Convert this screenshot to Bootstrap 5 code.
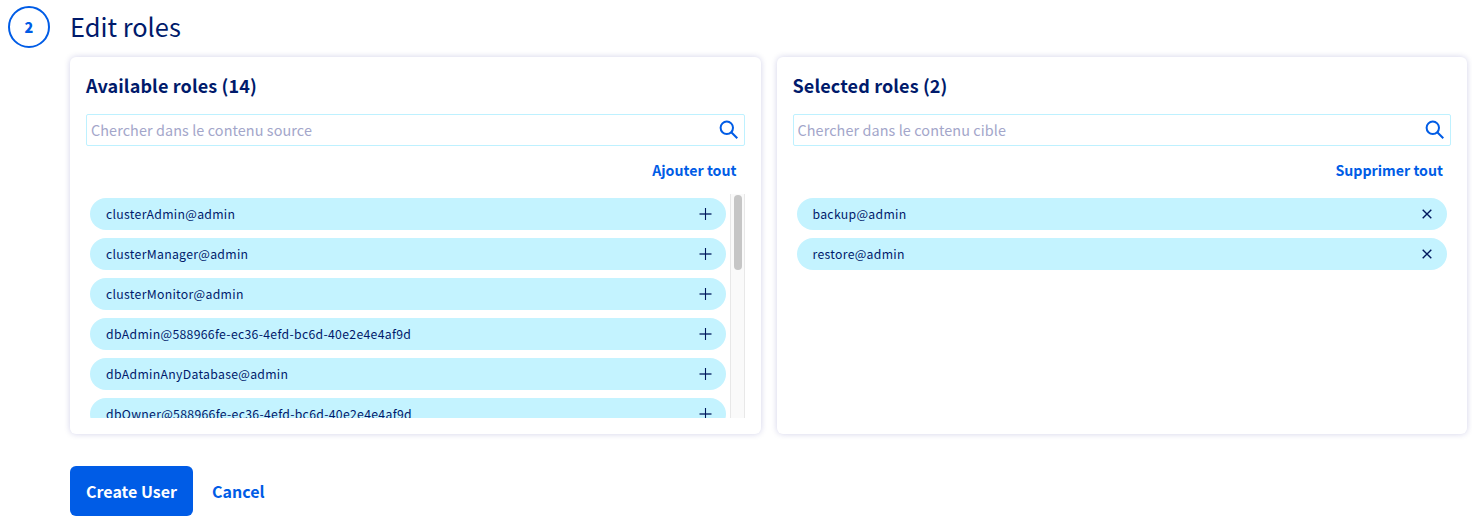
<!DOCTYPE html>
<html lang="fr">
<head>
<meta charset="utf-8">
<meta name="viewport" content="width=device-width, initial-scale=1">
<title>Edit roles</title>
<link href="https://cdn.jsdelivr.net/npm/bootstrap@5.3.0/dist/css/bootstrap.min.css" rel="stylesheet">
<style>
  body { font-family: "Noto Sans CJK SC", "Open Sans", sans-serif; color: #001a6b; overflow: hidden; }
  .step { padding: 6px 5px 0 8px; }
  .step-number { width: 42px; height: 42px; border: 2px solid #005ce6; color: #005ce6; font-size: 14.4px; font-weight: 900; padding-bottom: 1px; }
  .step-body { margin-left: 20px; min-width: 0; }
  .step-title { font-size: 25.4px; line-height: 40px; height: 42px; }
  .role-panels { gap: 16px; margin-top: 9px; }
  .role-panel { flex: 1 1 0; min-width: 0; height: 377px; border-radius: 6px; padding: 16px; box-shadow: 0 0 6px rgba(0, 0, 135, .18); }
  .panel-title { font-size: 18px; line-height: 25px; height: 41px; letter-spacing: .13px; }
  .search-box { height: 32px; border: 1px solid #bef1ff; border-radius: 2px; padding: 0 5px 0 4px; }
  .search-box input { font-size: 14.4px; line-height: 30px; height: 30px; letter-spacing: .09px; color: inherit; outline: 0; }
  .search-box input::placeholder { color: #a3a6ca; opacity: 1; }
  .bulk-action { height: 48px; line-height: 48px; font-size: 14.2px; padding-right: 8px; }
  a { color: #005ce6; }
  .role-list { height: 224px; padding: 4px; gap: 8px; overflow: hidden; }
  .role-chip { flex: none; height: 32px; padding: 0 12px 0 16px; font-size: 12.25px; line-height: 32px; background: #c4f3ff; letter-spacing: .3px; }
  .scroll-track { width: 15px; background: #fafafa; border: solid #e8e8e8; border-width: 0 1px; padding: 1px 3px 0; }
  .scroll-thumb { width: 8px; height: 75px; background: #c6c6c6; }
  .form-actions { margin-top: 32px; gap: 19px; }
  .btn-create { height: 50px; width: 123px; padding: 0; border: 0; border-radius: 6px; background: #005ce6; color: #fff; font-size: 16px; }
  .cancel-link { font-size: 16px; }
</style>
</head>
<body>
<svg class="d-none">
  <symbol id="search" viewBox="0 0 20 20"><g fill="none" stroke="#005ce6" stroke-width="2"><circle cx="7.8" cy="7.8" r="6.2"/><path d="M12.3 12.3 18.3 18.3"/></g></symbol>
  <symbol id="plus" viewBox="0 0 16 16"><path d="M1.5 8H13.5" fill="none" stroke="#00185e" stroke-opacity=".65" stroke-width="2"/><path d="M7.5 2V14" fill="none" stroke="#00185e" stroke-width="1.1"/></symbol>
  <symbol id="cross" viewBox="0 0 16 16"><path d="M3.7 3.7 12.3 12.3M12.3 3.7 3.7 12.3" fill="none" stroke="#00185e" stroke-width="1.4"/></symbol>
</svg>
<main class="step d-flex align-items-start">
  <div class="step-number rounded-circle d-flex align-items-center justify-content-center flex-shrink-0">2</div>
  <div class="step-body flex-grow-1">
    <h2 class="step-title fw-normal m-0">Edit roles</h2>
    <div class="role-panels d-flex">
      <section class="role-panel bg-white">
        <h3 class="panel-title fw-bold m-0">Available roles (14)</h3>
        <div class="search-box d-flex align-items-center">
          <input class="border-0 p-0 flex-grow-1 bg-transparent" type="text" placeholder="Chercher dans le contenu source">
          <svg width="20" height="20"><use href="#search"/></svg>
        </div>
        <div class="bulk-action text-end"><a class="fw-bold text-decoration-none" href="#">Ajouter tout</a></div>
        <div class="d-flex">
          <div class="role-list d-flex flex-column flex-grow-1">
            <div class="role-chip rounded-pill d-flex align-items-center justify-content-between"><span>clusterAdmin@admin</span><svg width="16" height="16"><use href="#plus"/></svg></div>
            <div class="role-chip rounded-pill d-flex align-items-center justify-content-between"><span>clusterManager@admin</span><svg width="16" height="16"><use href="#plus"/></svg></div>
            <div class="role-chip rounded-pill d-flex align-items-center justify-content-between"><span>clusterMonitor@admin</span><svg width="16" height="16"><use href="#plus"/></svg></div>
            <div class="role-chip rounded-pill d-flex align-items-center justify-content-between"><span>dbAdmin@588966fe-ec36-4efd-bc6d-40e2e4e4af9d</span><svg width="16" height="16"><use href="#plus"/></svg></div>
            <div class="role-chip rounded-pill d-flex align-items-center justify-content-between"><span>dbAdminAnyDatabase@admin</span><svg width="16" height="16"><use href="#plus"/></svg></div>
            <div class="role-chip rounded-pill d-flex align-items-center justify-content-between"><span>dbOwner@588966fe-ec36-4efd-bc6d-40e2e4e4af9d</span><svg width="16" height="16"><use href="#plus"/></svg></div>
          </div>
          <div class="scroll-track"><div class="scroll-thumb rounded-pill"></div></div>
        </div>
      </section>
      <section class="role-panel bg-white">
        <h3 class="panel-title fw-bold m-0">Selected roles (2)</h3>
        <div class="search-box d-flex align-items-center">
          <input class="border-0 p-0 flex-grow-1 bg-transparent" type="text" placeholder="Chercher dans le contenu cible">
          <svg width="20" height="20"><use href="#search"/></svg>
        </div>
        <div class="bulk-action text-end"><a class="fw-bold text-decoration-none" href="#">Supprimer tout</a></div>
        <div class="role-list d-flex flex-column">
          <div class="role-chip rounded-pill d-flex align-items-center justify-content-between"><span>backup@admin</span><svg width="16" height="16"><use href="#cross"/></svg></div>
          <div class="role-chip rounded-pill d-flex align-items-center justify-content-between"><span>restore@admin</span><svg width="16" height="16"><use href="#cross"/></svg></div>
        </div>
      </section>
    </div>
    <div class="form-actions d-flex align-items-center">
      <button class="btn btn-create fw-bold" type="button">Create User</button>
      <a class="cancel-link fw-bold text-decoration-none" href="#">Cancel</a>
    </div>
  </div>
</main>
<script src="https://cdn.jsdelivr.net/npm/bootstrap@5.3.0/dist/js/bootstrap.bundle.min.js"></script>
</body>
</html>
